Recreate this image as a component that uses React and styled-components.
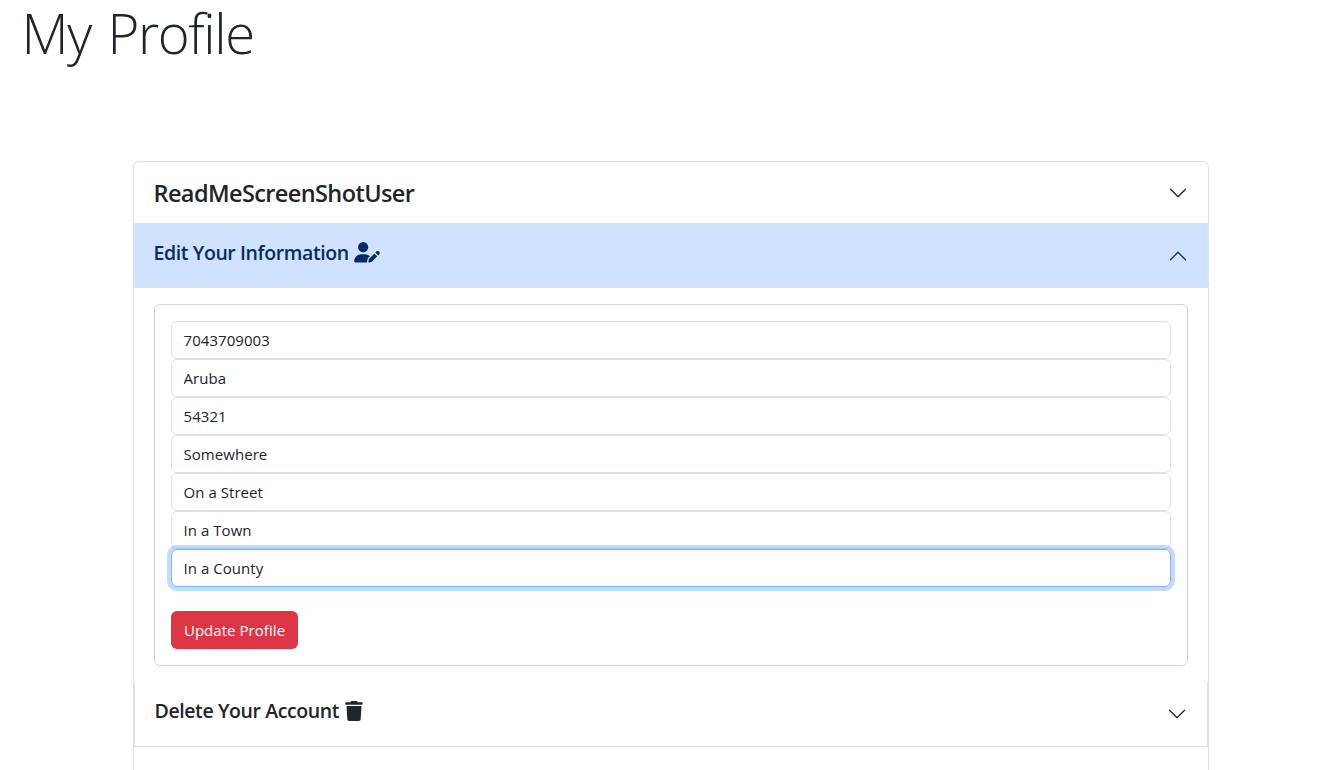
import React from 'react';
import styled, { createGlobalStyle, css } from 'styled-components';
import { FaUserPen, FaTrash } from 'react-icons/fa6';

const GlobalStyle = createGlobalStyle`
  *, *::before, *::after { box-sizing: border-box; }
  body {
    margin: 0;
    background: #fff;
    color: #212529;
    font-family: 'Open Sans', 'Noto Sans', sans-serif;
    font-size: 16px;
    line-height: 1.5;
  }
`;

const Page = styled.main`
  display: flex;
  flex-direction: column;
  height: 770px;
`;

const Title = styled.h1`
  margin: 0 0 94px;
  padding-left: 21.5px;
  height: 67px;
  font-size: 54.5px;
  font-weight: 300;
  line-height: 67px;
  letter-spacing: -1.4px;
  word-spacing: 4px;
`;

const Accordion = styled.div`
  flex: 1;
  width: 1076px;
  margin-left: 133px;
  border: 1px solid #dee2e6;
  border-bottom: 0;
  border-radius: 6px 6px 0 0;
`;

const Item = styled.section`
  ${(p) => p.$nested && css`
    border: solid #dee2e6;
    border-width: 0 1px 1px;
  `}
`;

const Header = styled.button`
  display: flex;
  align-items: center;
  justify-content: space-between;
  width: 100%;
  height: ${(p) => p.$height}px;
  padding: 0 20px 0 19.5px;
  border: 0;
  background: transparent;
  color: inherit;
  font: inherit;
  text-align: left;
  ${(p) => p.$open && css`
    background: #cfe2ff;
    color: #052c65;
    box-shadow: inset 0 1px #dee2e6, inset 0 -1px #dee2e6;
  `}
`;

const UserName = styled.span`
  padding-top: 2px;
  font-size: 23.5px;
  font-weight: 600;
  line-height: 29px;
  letter-spacing: -0.6px;
`;

const Heading = styled.span`
  display: flex;
  align-items: center;
  gap: 5px;
  padding-bottom: 6px;
  font-size: 19.5px;
  font-weight: 600;
  line-height: 24px;
  letter-spacing: -0.4px;
`;

const UserPenIcon = styled(FaUserPen)`
  width: 26px;
  height: 20.5px;
`;

const TrashIcon = styled(FaTrash)`
  width: 18px;
  height: 20px;
  margin-left: 1px;
`;

const Chevron = styled.svg`
  width: 20px;
  height: 20px;
  fill: currentColor;
  transform: ${(p) => (p.$up ? 'rotate(180deg)' : 'none')};
`;

const Body = styled.div`
  padding: 16px 20px;
`;

const Card = styled.form`
  height: 362px;
  padding: 16px;
  border: 1px solid #d2d3d4;
  border-radius: 6px;
`;

const Field = styled.input`
  display: block;
  width: 100%;
  height: 38px;
  padding: 6px 12px 6px 11.5px;
  border: 1px solid #dee2e6;
  border-radius: 6px;
  outline: 0;
  background: #fff;
  color: #212529;
  font: inherit;
  font-size: 15px;
  letter-spacing: 0.05px;
  ${(p) => p.$active && css`
    position: relative;
    border-color: #86b7fe;
    box-shadow: 0 0 0 4px rgba(13, 110, 253, 0.25);
  `}
`;

const Submit = styled.button`
  display: block;
  width: 127px;
  height: 38px;
  margin-top: 24px;
  padding: 0;
  border: 0;
  border-radius: 6px;
  background: #dc3545;
  color: #fff;
  font: inherit;
  font-size: 15px;
  letter-spacing: 0.05px;
  white-space: nowrap;
`;

const fields = [
  { label: 'Phone number', value: '7043709003' },
  { label: 'Country', value: 'Aruba' },
  { label: 'Postcode', value: '54321' },
  { label: 'Town or city', value: 'Somewhere' },
  { label: 'Street address 1', value: 'On a Street' },
  { label: 'Street address 2', value: 'In a Town' },
  { label: 'County', value: 'In a County', active: true },
];

function Arrow({ up }) {
  return (
    <Chevron viewBox="0 0 16 16" $up={up} aria-hidden="true">
      <path
        fillRule="evenodd"
        d="M1.646 4.646a.5.5 0 0 1 .708 0L8 10.293l5.646-5.647a.5.5 0 0 1 .708.708l-6 6a.5.5 0 0 1-.708 0l-6-6a.5.5 0 0 1 0-.708z"
      />
    </Chevron>
  );
}

export default function App() {
  return (
    <Page>
      <GlobalStyle />
      <Title>My Profile</Title>
      <Accordion>
        <Item>
          <Header $height={61}>
            <UserName>ReadMeScreenShotUser</UserName>
            <Arrow />
          </Header>
        </Item>
        <Item>
          <Header $height={65} $open>
            <Heading>
              Edit Your Information
              <UserPenIcon />
            </Heading>
            <Arrow up />
          </Header>
          <Body>
            <Card>
              {fields.map((f) => (
                <Field key={f.label} aria-label={f.label} defaultValue={f.value} $active={f.active} />
              ))}
              <Submit type="button">Update Profile</Submit>
            </Card>
          </Body>
        </Item>
        <Item $nested>
          <Header $height={64}>
            <Heading>
              Delete Your Account
              <TrashIcon />
            </Heading>
            <Arrow />
          </Header>
        </Item>
      </Accordion>
    </Page>
  );
}
